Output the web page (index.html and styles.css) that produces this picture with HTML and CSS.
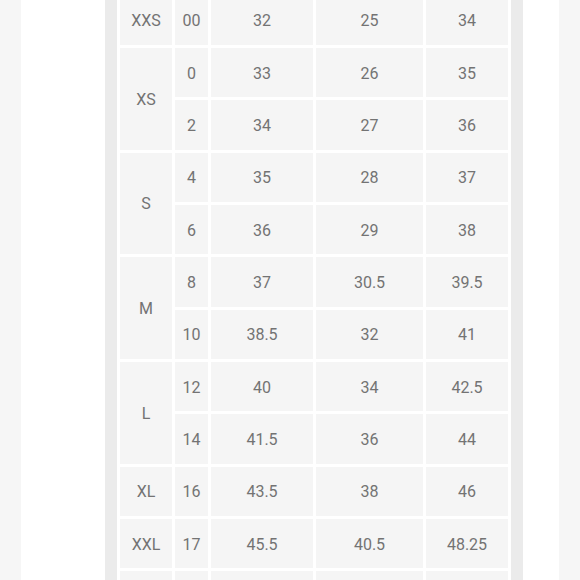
FILE: index.html
```html
<!DOCTYPE html>
<html>
<head>
<meta charset="utf-8">
<link rel="stylesheet" href="styles.css">
</head>
<body>
<div class="page">
  <div class="edge"></div>
  <div class="gutter-left"></div>
  <div class="panel">
    <div class="chart">
      <div class="cell size">XXS</div><div class="cell">00</div><div class="cell">32</div><div class="cell">25</div><div class="cell">34</div>

      <div class="cell size span2">XS</div><div class="cell">0</div><div class="cell">33</div><div class="cell">26</div><div class="cell">35</div>
      <div class="cell">2</div><div class="cell">34</div><div class="cell">27</div><div class="cell">36</div>

      <div class="cell size span2">S</div><div class="cell">4</div><div class="cell">35</div><div class="cell">28</div><div class="cell">37</div>
      <div class="cell">6</div><div class="cell">36</div><div class="cell">29</div><div class="cell">38</div>

      <div class="cell size span2">M</div><div class="cell">8</div><div class="cell">37</div><div class="cell">30.5</div><div class="cell">39.5</div>
      <div class="cell">10</div><div class="cell">38.5</div><div class="cell">32</div><div class="cell">41</div>

      <div class="cell size span2">L</div><div class="cell">12</div><div class="cell">40</div><div class="cell">34</div><div class="cell">42.5</div>
      <div class="cell">14</div><div class="cell">41.5</div><div class="cell">36</div><div class="cell">44</div>

      <div class="cell size">XL</div><div class="cell">16</div><div class="cell">43.5</div><div class="cell">38</div><div class="cell">46</div>

      <div class="cell size">XXL</div><div class="cell">17</div><div class="cell">45.5</div><div class="cell">40.5</div><div class="cell">48.25</div>

      <div class="cell"></div><div class="cell"></div><div class="cell"></div><div class="cell"></div><div class="cell"></div>
    </div>
  </div>
  <div class="gutter-right"></div>
  <div class="edge edge-right"></div>
</div>
</body>
</html>
```

FILE: styles.css
```css
html, body {
  margin: 0;
  padding: 0;
  height: 580px;
  overflow: hidden;
  background: #ffffff;
}

.page {
  display: flex;
  height: 580px;
  font-family: Roboto, "Liberation Sans", sans-serif;
  font-size: 16px;
  color: #737373;
}

.edge {
  width: 21px;
  flex: none;
  background: #f6f6f6;
}

.edge-right {
  width: 21px;
}

.gutter-left {
  width: 84px;
  flex: none;
  background: #ffffff;
}

.gutter-right {
  width: 36px;
  flex: none;
  background: #ffffff;
}

.panel {
  width: 418px;
  flex: none;
  box-sizing: border-box;
  padding-left: 12px;
  background: #ebebeb;
  overflow: hidden;
}

.chart {
  display: grid;
  grid-template-columns: 52px 33px 102px 107px 82px;
  grid-auto-rows: 49.33px;
  gap: 3px;
  padding: 3px;
  width: max-content;
  margin-top: -7.33px;
  background: #ffffff;
}

.cell {
  display: flex;
  align-items: center;
  justify-content: center;
  box-sizing: border-box;
  padding-top: 2px;
  background: #f5f5f5;
  line-height: 1;
}

.span2 {
  grid-row: span 2;
}
```
